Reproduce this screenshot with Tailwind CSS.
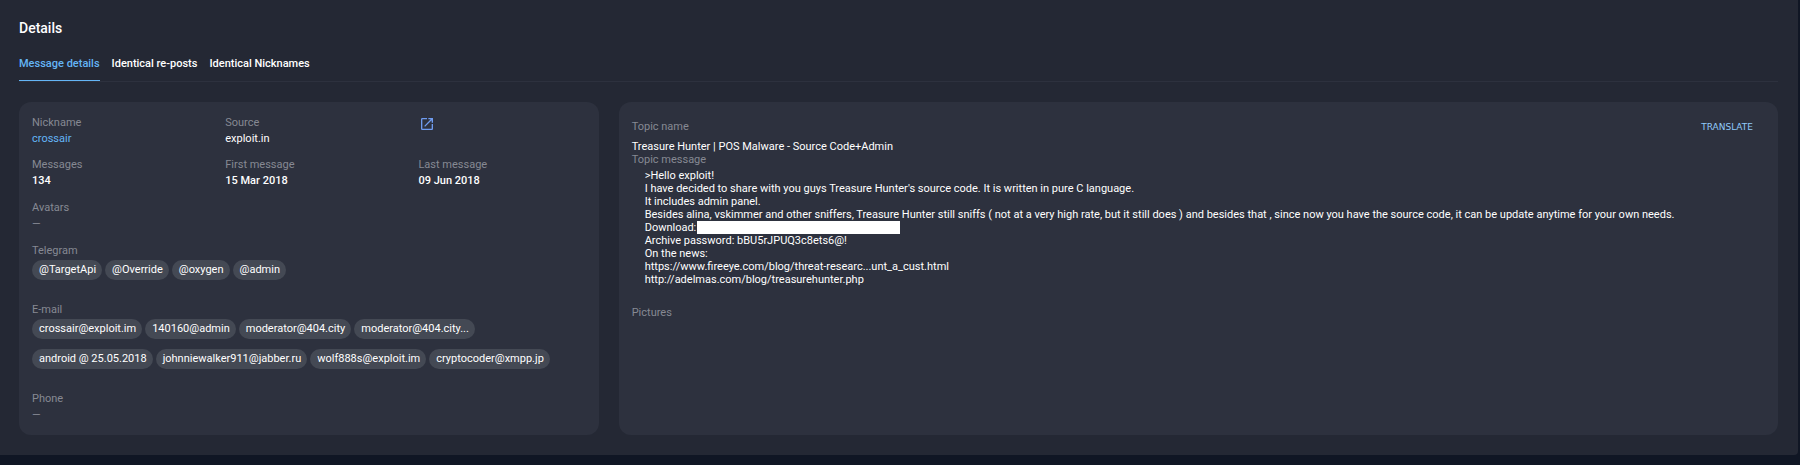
<!DOCTYPE html>
<html lang="en">
<head>
    <meta charset="UTF-8">
    <meta name="viewport" content="width=device-width, initial-scale=1.0">
    <title>Details</title>
    <script src="https://cdn.jsdelivr.net/npm/@tailwindcss/browser@4"></script>
</head>
<body class="bg-[#101624] font-['Roboto',sans-serif] text-[11px] leading-4 text-white">
    <main class="mr-[2px] rounded-br bg-[#242834] pt-4 pr-5 pb-5 pl-[19px]">
        <h1 class="text-sm leading-6 font-medium">Details</h1>

        <nav class="mt-3 flex gap-3 border-b border-[#2d313e] font-medium">
            <a href="#message" class="border-b border-[#64b5f6] pt-1 pb-2 text-[#64b5f6]">Message details</a>
            <a href="#reposts" class="pt-1 pb-2">Identical re-posts</a>
            <a href="#nicknames" class="pt-1 pb-2">Identical Nicknames</a>
        </nav>

        <div class="mt-5 grid grid-cols-[1fr_2fr] gap-5">
            <!-- Author -->
            <section class="flex flex-col gap-[11px] rounded-xl bg-[#2d313e] pt-[13px] pb-3">
                <dl class="grid grid-cols-3 gap-y-[10px]">
                    <div class="px-[13px]">
                        <dt class="text-[#868993]">Nickname</dt>
                        <dd><a href="#crossair" class="text-[#64b5f6]">crossair</a></dd>
                    </div>
                    <div class="px-[13px]">
                        <dt class="text-[#868993]">Source</dt>
                        <dd>exploit.in</dd>
                    </div>
                    <div class="pt-px pl-[14px]">
                        <a href="#source" aria-label="Open source" class="block w-4">
                            <svg class="size-4 fill-[#6f9cf0]" viewBox="0 0 24 24"><path d="M19 19H5V5h7V3H5a2 2 0 0 0-2 2v14a2 2 0 0 0 2 2h14c1.100 0 2-.9 2-2v-7h-2v7zM14 3v2h3.590l-9.830 9.830 1.410 1.410L19 6.410V10h2V3h-7z"/></svg>
                        </a>
                    </div>
                    <div class="px-[13px]">
                        <dt class="text-[#868993]">Messages</dt>
                        <dd class="font-medium">134</dd>
                    </div>
                    <div class="px-[13px]">
                        <dt class="text-[#868993]">First message</dt>
                        <dd class="font-medium">15 Mar 2018</dd>
                    </div>
                    <div class="px-[13px]">
                        <dt class="text-[#868993]">Last message</dt>
                        <dd class="font-medium">09 Jun 2018</dd>
                    </div>
                </dl>

                <div class="px-[13px] text-[#868993]">
                    <h2>Avatars</h2>
                    <p>—</p>
                </div>

                <div class="px-[13px]">
                    <h2 class="text-[#868993]">Telegram</h2>
                    <ul class="mt-px mb-[11px] flex flex-wrap gap-x-[3px] gap-y-[10px] leading-5">
                        <li class="rounded-full bg-[#444954] pr-[6px] pl-[7px]">@TargetApi</li>
                        <li class="rounded-full bg-[#444954] pr-[6px] pl-[7px]">@Override</li>
                        <li class="rounded-full bg-[#444954] pr-[6px] pl-[7px]">@oxygen</li>
                        <li class="rounded-full bg-[#444954] pr-[6px] pl-[7px]">@admin</li>
                    </ul>
                </div>

                <div class="px-[13px]">
                    <h2 class="text-[#868993]">E-mail</h2>
                    <ul class="mt-px mb-[11px] flex flex-wrap gap-x-[3px] gap-y-[10px] leading-5">
                        <li class="rounded-full bg-[#444954] pr-[6px] pl-[7px]">crossair@exploit.im</li>
                        <li class="rounded-full bg-[#444954] pr-[6px] pl-[7px]">140160@admin</li>
                        <li class="rounded-full bg-[#444954] pr-[6px] pl-[7px]">moderator@404.city</li>
                        <li class="rounded-full bg-[#444954] pr-[6px] pl-[7px]">moderator@404.city...</li>
                        <li class="rounded-full bg-[#444954] pr-[6px] pl-[7px]">android @ 25.05.2018</li>
                        <li class="rounded-full bg-[#444954] pr-[6px] pl-[7px]">johnniewalker911@jabber.ru</li>
                        <li class="rounded-full bg-[#444954] pr-[6px] pl-[7px]">wolf888s@exploit.im</li>
                        <li class="rounded-full bg-[#444954] pr-[6px] pl-[7px]">cryptocoder@xmpp.jp</li>
                    </ul>
                </div>

                <div class="px-[13px] text-[#868993]">
                    <h2>Phone</h2>
                    <p>—</p>
                </div>
            </section>

            <!-- Topic -->
            <section class="rounded-xl bg-[#2d313e] px-[13px] pt-[17px]">
                <div class="flex justify-between">
                    <h2 class="text-[#868993]">Topic name</h2>
                    <button type="button" class="mr-3 pt-px font-['DejaVu_Sans',sans-serif] text-[9px] leading-[15px] text-[#90caf9]">TRANSLATE</button>
                </div>
                <div class="mt-[5px] leading-[13px]">
                    <p>Treasure Hunter | POS Malware - Source Code+Admin</p>
                    <h2 class="text-[#868993]">Topic message</h2>
                </div>
                <div class="mt-[3px] px-[13px] leading-[13px]">
                    <p>&gt;Hello exploit!</p>
                    <p>I have decided to share with you guys Treasure Hunter's source code. It is written in pure C language.</p>
                    <p>It includes admin panel.</p>
                    <p>Besides alina, vskimmer and other sniffers, Treasure Hunter still sniffs ( not at a very high rate, but it still does ) and besides that , since now you have the source code, it can be update anytime for your own needs.</p>
                    <p class="flex gap-px">Download:<span class="h-[13px] w-[203px] bg-white"></span></p>
                    <p>Archive password: bBU5rJPUQ3c8ets6@!</p>
                    <p>On the news:</p>
                    <p>https://www.fireeye.com/blog/threat-researc...unt_a_cust.html</p>
                    <p>http://adelmas.com/blog/treasurehunter.php</p>
                </div>
                <h2 class="mt-[19px] text-[#868993]">Pictures</h2>
            </section>
        </div>
    </main>
</body>
</html>
